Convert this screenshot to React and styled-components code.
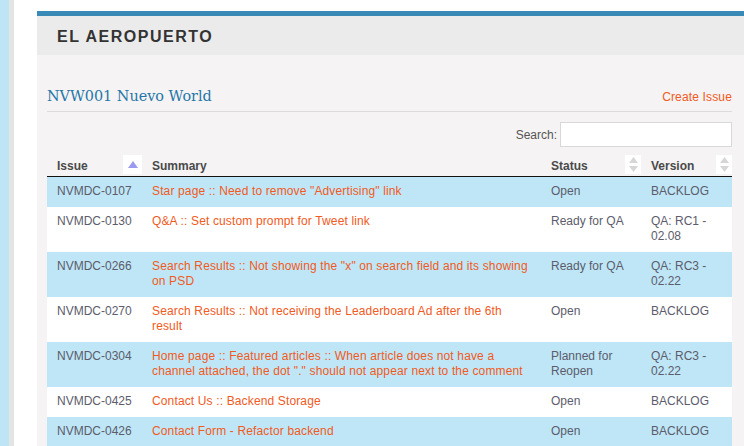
import React from "react";
import styled, { createGlobalStyle } from "styled-components";

const Global = createGlobalStyle`
  html, body { margin: 0; padding: 0; background: #fff; }
  body { font-family: "Liberation Sans", Arial, sans-serif; font-size: 12px; }
`;

const Page = styled.div`
  display: flex;
  width: 744px;
  height: 446px;
  overflow: hidden;
  background: #fff;
`;

const BlueStrip = styled.div`
  width: 9px;
  flex: none;
  background: #bee5f5;
`;

const GrayStrip = styled.div`
  width: 5px;
  flex: none;
  background: #e4e4e4;
`;

const Gutter = styled.div`
  width: 23px;
  flex: none;
  background: #fff;
`;

const Panel = styled.div`
  flex: 1;
  margin-top: 11px;
  border-top: 5px solid #3a8ab8;
  background: #f5f3f3;
  display: flex;
  flex-direction: column;
  min-width: 0;
`;

const PanelHeader = styled.div`
  height: 39px;
  flex: none;
  background: #ebebeb;
  display: flex;
  align-items: center;
  padding-left: 20px;
  padding-top: 2px;
  box-sizing: border-box;
`;

const PanelTitle = styled.h2`
  margin: 0;
  font-size: 16px;
  font-weight: bold;
  letter-spacing: 1.5px;
  color: #333;
`;

const Content = styled.div`
  padding: 0 12px 0 10px;
`;

const TitleRow = styled.div`
  display: flex;
  justify-content: space-between;
  align-items: baseline;
  box-sizing: border-box;
  height: 57px;
  padding-top: 31px;
  border-bottom: 1px solid #dcdcdc;
  line-height: 20px;
`;

const ProjectTitle = styled.h3`
  margin: 0;
  font-family: "DejaVu Serif", Georgia, serif;
  font-weight: normal;
  font-size: 14.4px;
  color: #2576a8;
`;

const Link = styled.a`
  color: #f15a22;
  text-decoration: none;
  font-size: 12px;
  letter-spacing: 0.15px;
`;

const SearchRow = styled.div`
  display: flex;
  justify-content: flex-end;
  align-items: center;
  gap: 3px;
  margin-top: 10px;
  color: #555;
`;

const SearchInput = styled.input`
  width: 172px;
  height: 25px;
  box-sizing: border-box;
  border: 1px solid #d8d8d8;
  background: #fff;
  outline: none;
`;

const Table = styled.table`
  width: 100%;
  margin-top: 8px;
  border-collapse: collapse;
  table-layout: fixed;
`;

const Th = styled.th`
  position: relative;
  height: 21px;
  padding: 0 10px;
  text-align: left;
  font-weight: bold;
  font-size: 12px;
  color: #4a4a4a;
  border-bottom: 1px solid #111;
  vertical-align: middle;
`;

const SortBox = styled.span`
  position: absolute;
  right: 0;
  top: 0;
  width: ${(p) => p.$w}px;
  height: 19px;
  background: #fff;
  display: flex;
  align-items: center;
  justify-content: center;
`;

const Tr = styled.tr`
  background: ${(p) => (p.$alt ? "#fff" : "#bee6f6")};
`;

const Td = styled.td`
  padding: 7px 10px 8px;
  line-height: 15px;
  vertical-align: top;
  font-size: 12px;
  letter-spacing: ${(p) => (p.$accent ? "0.14px" : "0")};
  color: ${(p) => (p.$accent ? "#f15a22" : "#5c5c6c")};
`;

const SortAsc = () => (
  <svg width="10" height="8" viewBox="0 0 10 8">
    <polygon points="5,0 10,7 0,7" fill="#9a9af0" />
  </svg>
);

const SortBoth = () => (
  <svg width="9" height="15" viewBox="0 0 9 15">
    <polygon points="4.5,0 9,6 0,6" fill="#d6d6d6" />
    <polygon points="4.5,15 9,9 0,9" fill="#d6d6d6" />
  </svg>
);

const rows = [
  ["NVMDC-0107", 'Star page :: Need to remove "Advertising" link', "Open", "BACKLOG"],
  ["NVMDC-0130", "Q&A :: Set custom prompt for Tweet link", "Ready for QA", "QA: RC1 - 02.08"],
  ["NVMDC-0266", 'Search Results :: Not showing the "x" on search field and its showing on PSD', "Ready for QA", "QA: RC3 - 02.22"],
  ["NVMDC-0270", "Search Results :: Not receiving the Leaderboard Ad after the 6th result", "Open", "BACKLOG"],
  ["NVMDC-0304", 'Home page :: Featured articles :: When article does not have a channel attached, the dot "." should not appear next to the comment', "Planned for Reopen", "QA: RC3 - 02.22"],
  ["NVMDC-0425", "Contact Us :: Backend Storage", "Open", "BACKLOG"],
  ["NVMDC-0426", "Contact Form - Refactor backend", "Open", "BACKLOG"],
];

export default function App() {
  return (
    <>
      <Global />
      <Page>
        <BlueStrip />
        <GrayStrip />
        <Gutter />
        <Panel>
          <PanelHeader>
            <PanelTitle>EL AEROPUERTO</PanelTitle>
          </PanelHeader>
          <Content>
            <TitleRow>
              <ProjectTitle>NVW001 Nuevo World</ProjectTitle>
              <Link href="#">Create Issue</Link>
            </TitleRow>
            <SearchRow>
              <label>Search:</label>
              <SearchInput type="text" />
            </SearchRow>
            <Table>
              <colgroup>
                <col style={{ width: 95 }} />
                <col style={{ width: 399 }} />
                <col style={{ width: 100 }} />
                <col style={{ width: 91 }} />
              </colgroup>
              <thead>
                <tr>
                  <Th>
                    Issue
                    <SortBox $w={19}><SortAsc /></SortBox>
                  </Th>
                  <Th>Summary</Th>
                  <Th>
                    Status
                    <SortBox $w={16}><SortBoth /></SortBox>
                  </Th>
                  <Th>
                    Version
                    <SortBox $w={16}><SortBoth /></SortBox>
                  </Th>
                </tr>
              </thead>
              <tbody>
                {rows.map((r, i) => (
                  <Tr key={r[0]} $alt={i % 2 === 1}>
                    <Td>{r[0]}</Td>
                    <Td $accent>{r[1]}</Td>
                    <Td>{r[2]}</Td>
                    <Td>{r[3]}</Td>
                  </Tr>
                ))}
              </tbody>
            </Table>
          </Content>
        </Panel>
      </Page>
    </>
  );
}
